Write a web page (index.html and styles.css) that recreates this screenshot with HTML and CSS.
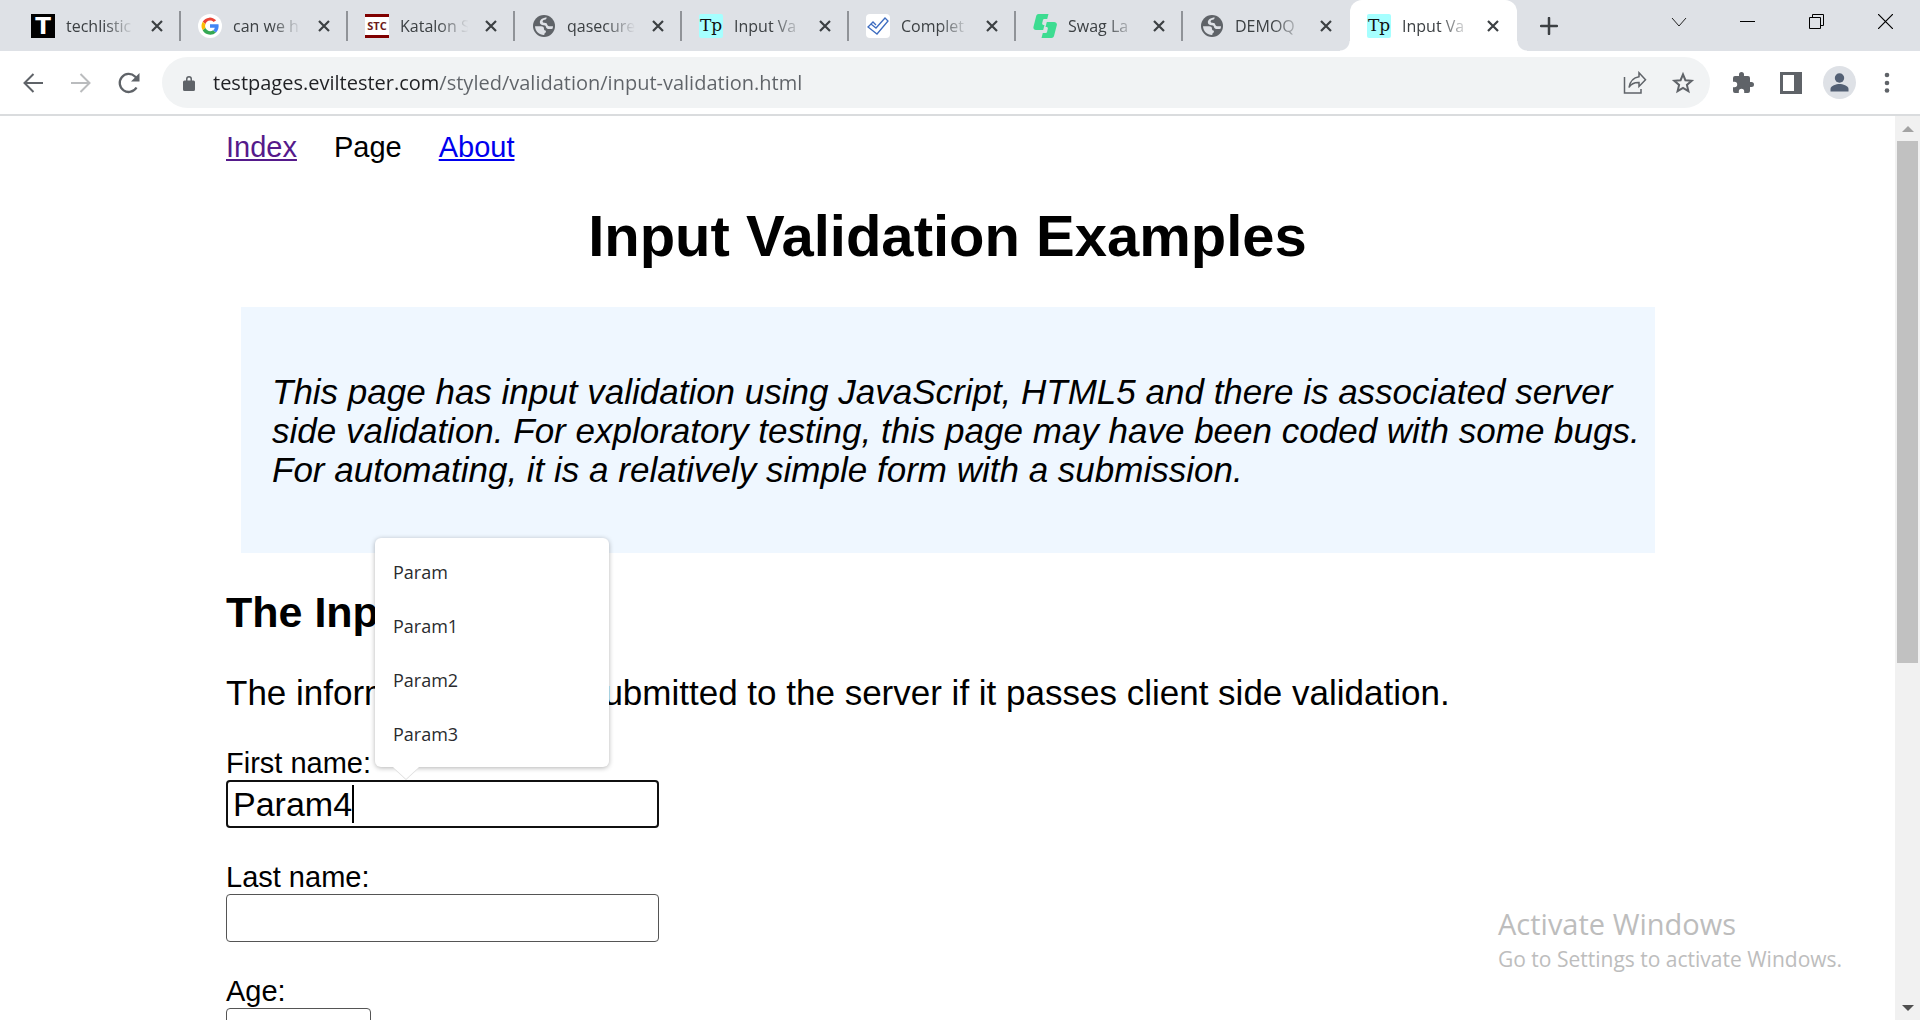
FILE: index.html
```html
<!DOCTYPE html>
<html lang="en">
<head>
<meta charset="utf-8">
<title>Input Validation</title>
<link rel="stylesheet" href="styles.css">
</head>
<body>
<svg class="sprite" aria-hidden="true">
  <symbol id="x" viewBox="0 0 12 12"><path d="M1 1l10 10M11 1L1 11" stroke="#3c4043" stroke-width="2.200" fill="none"/></symbol>
  <symbol id="globe" viewBox="0 0 24 24"><circle cx="12" cy="12" r="11" fill="#5f6368"/><g fill="#dee1e6"><path d="M15 3.600c-.5 1.700-1.500 1.600-2.800 1.700-1.600.2-2.400 1.600-1.700 2.900.6 1 1.500 1 1.500 2.300h3c1.500.1 1.700.9 1.900 1.600.3.900 1.300.8 3.900.8A9 9 0 0 0 15 3.600z" fill="none"/><path d="M3 12.300h6c2.300 0 3 1 3 2.800 0 1.200.9 1.500 1.900 1.600v1.200c0 1-1.100.6-1.300 1.500l-.4 1.600C7.500 21.200 3.200 17.300 3 12.300z"/><path d="M14.500 3.300c.3 1.500-.5 2.300-1.800 2.400-1.800.2-2.600 1.400-1.800 2.500.7.900 2.200.3 3.300.9 1.300.8.700 2.400 2.100 2.900 1.300.5 2.500.1 4.700.2-.1 1.100-.2 1.900-.5 2.600-2 .6-4.700.3-5.800-.6-1.100-.9-.5-2.100-1.700-2.600-1.600-.7-4.100-.2-4.900-2.200-1-2.700 1.400-5.300 6.400-6.100z"/></g></symbol>
</svg>

<header class="tabstrip">
  <div class="tabs">
    <div class="tab"><span class="fav fav-t">T</span><span class="tab-title">techlistic</span><button class="close" aria-label="Close tab"><svg><use href="#x"/></svg></button></div>
    <div class="tab"><svg class="fav" viewBox="0 0 24 24"><circle cx="12" cy="12" r="12" fill="#fff"/><path d="M18.200 6.300A8.500 8.500 0 0 0 4.700 7.700l2.800 2.200A5.100 5.100 0 0 1 12 6.500c1.400 0 2.600.5 3.600 1.400z" fill="#ea4335"/><path d="M4.700 7.700a8.700 8.700 0 0 0 0 8.600l2.800-2.200a5.200 5.200 0 0 1 0-4.200z" fill="#fbbc05"/><path d="M4.700 16.300A8.600 8.600 0 0 0 18 18.500l-2.900-2.200c-2.600 1.800-6.300.8-7.600-2.200z" fill="#34a853"/><path d="M12 10.300v3.500h4.800c-.2 1-.8 1.900-1.700 2.500l2.900 2.200c2.200-2 3-5.100 2.500-8.200z" fill="#4285f4"/></svg><span class="tab-title">can we h</span><button class="close" aria-label="Close tab"><svg><use href="#x"/></svg></button></div>
    <div class="tab"><span class="fav fav-stc">STC</span><span class="tab-title">Katalon S</span><button class="close" aria-label="Close tab"><svg><use href="#x"/></svg></button></div>
    <div class="tab"><svg class="fav"><use href="#globe"/></svg><span class="tab-title">qasecure</span><button class="close" aria-label="Close tab"><svg><use href="#x"/></svg></button></div>
    <div class="tab"><span class="fav fav-tp">Tp</span><span class="tab-title">Input Va</span><button class="close" aria-label="Close tab"><svg><use href="#x"/></svg></button></div>
    <div class="tab"><svg class="fav" viewBox="0 0 24 24"><rect width="24" height="24" rx="4" fill="#fff"/><path d="M2 13l3-3 5 4 9-10 3 3-11 13z" fill="none" stroke="#3d6cc0" stroke-width="1.300"/><path d="M5 10l2-2 3 3" fill="none" stroke="#3d6cc0" stroke-width="1.300"/></svg><span class="tab-title">Complet</span><button class="close" aria-label="Close tab"><svg><use href="#x"/></svg></button></div>
    <div class="tab"><svg class="fav" viewBox="0 0 24 24"><path d="M5.500 0H15.500l-1.300 5H11.500c-.8 0-1.400.5-1.600 1.300l-.7 2.900c-.2.900.3 1.800 1.300 1.800h1L10.200 16H3C1 16 0 14.500.5 12.700L3.200 2C3.500.8 4.400 0 5.500 0zM13.800 8H21c2 0 3.300 1.500 2.800 3.300L21 22c-.3 1.200-1.300 2-2.500 2H8.500l1.300-5H12.500c.8 0 1.400-.5 1.600-1.300l.7-2.900c.2-.9-.3-1.800-1.300-1.800h-1z" fill="#3ddc91"/></svg><span class="tab-title">Swag La</span><button class="close" aria-label="Close tab"><svg><use href="#x"/></svg></button></div>
    <div class="tab tab-before"><svg class="fav"><use href="#globe"/></svg><span class="tab-title">DEMOQ</span><button class="close" aria-label="Close tab"><svg><use href="#x"/></svg></button></div>
    <div class="tab tab-active"><span class="fav fav-tp">Tp</span><span class="tab-title">Input Va</span><button class="close" aria-label="Close tab"><svg><use href="#x"/></svg></button></div>
  </div>
  <button class="new-tab" aria-label="New tab"><svg width="18" height="18" viewBox="0 0 18 18"><path d="M9 1v16M1 9h16" stroke="#3c4043" stroke-width="2.500" stroke-linecap="round"/></svg></button>
  <div class="window-controls">
    <button aria-label="Search tabs"><svg width="16" height="16" viewBox="0 0 16 16"><path d="M1 4l7 8 7-8" fill="none" stroke="#222"/></svg></button>
    <button aria-label="Minimize"><svg width="15" height="15" viewBox="0 0 15 15"><path d="M0 7.500h15" stroke="#000"/></svg></button>
    <button aria-label="Restore"><svg width="15" height="15" viewBox="0 0 15 15"><path d="M.5 3.500h11v11H.5zM3.500 3.500v-3h11v11h-3" fill="none" stroke="#000"/></svg></button>
    <button aria-label="Close"><svg width="15" height="15" viewBox="0 0 15 15"><path d="M0 0l15 15M15 0L0 15" stroke="#000" stroke-width="1.200"/></svg></button>
  </div>
</header>

<div class="toolbar">
  <div class="nav-buttons">
    <button aria-label="Back"><svg width="20" height="20" viewBox="0 0 20 20"><path d="M20 10H2M10.500 1L1.500 10l9 9" fill="none" stroke="#5f6368" stroke-width="2"/></svg></button>
    <button aria-label="Forward"><svg width="20" height="20" viewBox="0 0 20 20"><path d="M0 10h18M9.500 1l9 9-9 9" fill="none" stroke="#babcbe" stroke-width="2"/></svg></button>
    <button aria-label="Reload"><svg width="22" height="22" viewBox="0 0 22 22"><path d="M18.500 15.500A9 9 0 1 1 17 4.500l2 2" fill="none" stroke="#5f6368" stroke-width="2.300"/><path d="M21.500 1v8.500H13z" fill="#5f6368"/></svg></button>
  </div>
  <div class="omnibox">
    <svg width="12" height="16" viewBox="0 0 12 16"><path d="M1.500 5.500H3V4a3 3 0 0 1 6 0v1.500h1.500A1.500 1.500 0 0 1 12 7v7.500a1.500 1.500 0 0 1-1.500 1.500h-9A1.500 1.500 0 0 1 0 14.500V7a1.500 1.500 0 0 1 1.500-1.500zm3 0h3V4a1.500 1.500 0 0 0-3 0z" fill="#5f6368"/></svg>
    <input class="url" type="text" aria-label="Address" value="testpages.eviltester.com/styled/validation/input-validation.html">
    <button aria-label="Share"><svg width="24" height="24" viewBox="0 0 24 24"><path d="M1.500 6v16h16.500v-4" fill="none" stroke="#5f6368" stroke-width="1.500"/><path d="M16 1.800l6.500 7-6.500 6.700v-4c-5-.2-8 1.500-10 5C7 10.500 10 6.500 16 5.700z" fill="none" stroke="#5f6368" stroke-width="1.500"/></svg></button>
    <button aria-label="Bookmark"><svg width="24" height="24" viewBox="0 0 24 24"><path d="M12 3.300l2.400 5.900 6.300.5-4.800 4.200 1.500 6.200L12 16.800l-5.400 3.300 1.500-6.200-4.800-4.200 6.300-.5z" fill="none" stroke="#5f6368" stroke-width="2"/></svg></button>
  </div>
  <div class="tools">
    <button aria-label="Extensions"><svg width="24" height="24" viewBox="0 0 24 24"><path d="M20.500 11H19V7a2 2 0 0 0-2-2h-4V3.500a2.500 2.500 0 0 0-5 0V5H4a2 2 0 0 0-2 2v3.800h1.500a2.700 2.700 0 0 1 0 5.400H2V20a2 2 0 0 0 2 2h3.800v-1.500a2.700 2.700 0 0 1 5.400 0V22H17a2 2 0 0 0 2-2v-4h1.500a2.500 2.500 0 0 0 0-5z" fill="#5f6368"/></svg></button>
    <button aria-label="Side panel"><svg width="22" height="22" viewBox="0 0 22 22"><path d="M0 0h22v22H0zM3 3v16h11V3z" fill="#5f6368" fill-rule="evenodd"/></svg></button>
    <button aria-label="Profile"><svg width="33" height="33" viewBox="0 0 33 33"><circle cx="16.500" cy="16.500" r="16.500" fill="#dee1e6"/><circle cx="16.500" cy="12" r="4.700" fill="#536074"/><path d="M7.500 25.500v-2.500c0-3.500 6-5 9-5s9 1.500 9 5v2.500z" fill="#536074"/></svg></button>
    <button aria-label="Menu"><svg width="6" height="22" viewBox="0 0 6 22"><g fill="#5f6368"><circle cx="3" cy="3" r="2.300"/><circle cx="3" cy="11" r="2.300"/><circle cx="3" cy="18.500" r="2.300"/></g></svg></button>
  </div>
</div>

<div class="viewport">
  <main class="page">
    <div class="content">
      <nav class="page-nav"><a class="visited" href="#index">Index</a><span>Page</span><a href="#about">About</a></nav>
      <h1>Input Validation Examples</h1>
      <div class="explanation"><p>This page has input validation using JavaScript, HTML5 and there is associated server side validation. For exploratory testing, this page may have been coded with some bugs. For automating, it is a relatively simple form with a submission.</p></div>
      <h2>The Input Form</h2>
      <p class="intro">The information will be submitted to the server if it passes client side validation.</p>
      <form>
        <div class="field">
          <label for="firstname">First name:</label>
          <input class="focused" id="firstname" type="text" value="Param4" autocomplete="off">
          <span class="caret"></span>
          <ul class="suggestions">
            <li>Param</li>
            <li>Param1</li>
            <li>Param2</li>
            <li>Param3</li>
          </ul>
        </div>
        <div class="field"><label for="surname">Last name:</label><input id="surname" type="text"></div>
        <div class="field"><label for="age">Age:</label><input class="short" id="age" type="text"></div>
      </form>
    </div>
  </main>
  <div class="scrollbar">
    <svg width="12" height="6" viewBox="0 0 12 6"><path d="M0 6l6-6 6 6z" fill="#a3a3a3"/></svg>
    <div class="track"><div class="thumb"></div></div>
    <svg width="12" height="6" viewBox="0 0 12 6"><path d="M0 0l6 6 6-6z" fill="#505050"/></svg>
  </div>
</div>

<aside class="watermark"><p class="watermark-title">Activate Windows</p><p>Go to Settings to activate Windows.</p></aside>
</body>
</html>
```
FILE: styles.css
```css
* { box-sizing: border-box; }

body {
  margin: 0;
  height: 100vh;
  overflow: hidden;
  display: flex;
  flex-direction: column;
  font-family: "Open Sans", "Noto Sans", sans-serif;
  background: #fff;
  color: #000;
}

button {
  padding: 0;
  border: 0;
  background: none;
  display: flex;
  align-items: center;
  justify-content: center;
}

h1, h2, p, ul { margin: 0; padding: 0; }
svg { display: block; flex: none; }
.sprite { position: absolute; width: 0; height: 0; }

/* Tab strip */
.tabstrip {
  flex: none;
  height: 51px;
  display: flex;
  padding-left: 14px;
  background: #dee1e6;
}
.tabs { display: flex; flex: 0 1 1503px; min-width: 0; }
.tab {
  position: relative;
  flex: 1 1 0;
  min-width: 0;
  display: flex;
  align-items: center;
  padding: 0 17px;
}
.tab::after {
  content: "";
  position: absolute;
  right: 0;
  top: 11px;
  width: 2px;
  height: 30px;
  background: #909398;
}
.tab-before::after { display: none; }
.tab-active { background: #fff; border-radius: 12px 12px 0 0; }
.tab-active::before,
.tab-active::after {
  content: "";
  position: absolute;
  top: auto;
  bottom: 0;
  width: 10px;
  height: 10px;
}
.tab-active::before { left: -10px; background: radial-gradient(circle at 0 0, #dee1e6 9px, #fff 10px); }
.tab-active::after { right: -10px; background: radial-gradient(circle at 100% 0, #dee1e6 9px, #fff 10px); }

.fav {
  flex: none;
  width: 24px;
  height: 24px;
  text-align: center;
}
.fav-t { background: #000; color: #fff; font: bold 23px/24px "DejaVu Sans", sans-serif; }
.fav-stc {
  border: solid #800000;
  border-width: 3px 0;
  background: #fff;
  color: #6b1a1a;
  font: bold 11px/18px "Open Sans", sans-serif;
}
.fav-tp {
  background: #a6ffff;
  border-radius: 2px;
  color: #111;
  font: 17px/22px "DejaVu Serif", "Liberation Serif", serif;
}
.tab-title {
  flex: 1;
  min-width: 0;
  margin: 0 8px 0 11px;
  overflow: hidden;
  white-space: nowrap;
  font-size: 16px;
  line-height: 24px;
  color: #3c4043;
  mask-image: linear-gradient(to right, #000 50%, transparent 90%);
}
.close { width: 14px; height: 14px; }
.close svg { width: 12px; height: 12px; }
.new-tab { width: 64px; }
.window-controls { display: flex; margin-left: auto; height: 43px; }
.window-controls button { width: 69px; }

/* Toolbar */
.toolbar {
  flex: none;
  height: 65px;
  display: flex;
  align-items: center;
  background: #fff;
  border-bottom: 2px solid #dadcde;
}
.nav-buttons { display: flex; padding: 0 9px; }
.nav-buttons button { width: 48px; height: 48px; }
.omnibox {
  flex: 1;
  min-width: 0;
  height: 51px;
  display: flex;
  align-items: center;
  padding: 0 3px 0 21px;
  border-radius: 26px;
  background: #f1f3f4;
}
.omnibox button { width: 48px; height: 48px; }
.url {
  flex: 1;
  min-width: 0;
  height: 40px;
  margin-left: 18px;
  padding: 0;
  border: 0;
  outline: 0;
  font-family: inherit;
  font-size: 20px;
  color: #202124;
  background: linear-gradient(to right, #202124 225px, #5f6368 225px);
  background-clip: text;
  -webkit-text-fill-color: transparent;
}
.tools { display: flex; padding: 0 9px; }
.tools button { width: 48px; height: 48px; }

/* Page */
.viewport { flex: 1; min-height: 0; display: flex; }
.page {
  flex: 1;
  min-width: 0;
  overflow: hidden;
  font-family: "Liberation Sans", Arial, sans-serif;
}
.content { max-width: 1443px; margin: 0 auto; padding-top: 15px; }
.page-nav { display: flex; gap: 37px; font-size: 29px; line-height: 33px; }
.page-nav a { color: #0000ee; }
.page-nav .visited { color: #551a8b; }
h1 { margin: 39px 0 38px; text-align: center; font-size: 58px; line-height: 66px; }
.explanation { margin: 0 14px 0 15px; padding: 65px 8px 64px 31px; background: #eff7ff; }
.explanation p { font-size: 35px; line-height: 39px; font-style: italic; }
h2 { margin: 35px 0 36px; font-size: 43px; line-height: 49px; }
.intro { margin-bottom: 34px; font-size: 35px; line-height: 39px; }

.field { position: relative; margin-bottom: 32px; font-size: 29px; }
.field label { display: block; line-height: 34px; }
.field input {
  display: block;
  width: 433px;
  height: 48px;
  padding: 0 6px;
  border: 1px solid #555;
  border-radius: 4px;
  outline: 0;
  font: 34px "Liberation Sans", Arial, sans-serif;
  color: #000;
  background: #fff;
}
.field .focused { border: 2px solid #101010; padding: 0 5px; }
.field .short { width: 145px; }
.caret {
  position: absolute;
  left: 126px;
  bottom: 5px;
  width: 2px;
  height: 38px;
  background: #000;
}

.suggestions {
  position: absolute;
  left: 149px;
  bottom: 61px;
  width: 234px;
  padding: 7px 0 6px;
  border-radius: 6px;
  background: #fff;
  box-shadow: 0 1px 5px rgba(0, 0, 0, 0.3);
  list-style: none;
  font: 18px/54px "Open Sans", "Noto Sans", sans-serif;
  color: #2a2b2e;
}
.suggestions li { padding-left: 18px; }
.suggestions::after {
  content: "";
  position: absolute;
  left: 18px;
  top: 100%;
  border: 13px solid transparent;
  border-top: 12px solid #fff;
  border-bottom: 0;
  filter: drop-shadow(0 1px 0 #ddd);
}

.scrollbar {
  flex: none;
  width: 25px;
  display: flex;
  flex-direction: column;
  align-items: center;
  gap: 9px;
  padding: 10px 0 9px;
  background: #f1f1f1;
}
.track { flex: 1; }
.thumb { width: 21px; height: 61%; background: #c1c1c1; }

.watermark {
  position: absolute;
  right: 78px;
  bottom: 46px;
  width: 344px;
  white-space: nowrap;
  font-size: 21px;
  line-height: 30px;
  color: #bdbdbd;
}
.watermark-title { font-size: 29px; line-height: 40px; }
```
